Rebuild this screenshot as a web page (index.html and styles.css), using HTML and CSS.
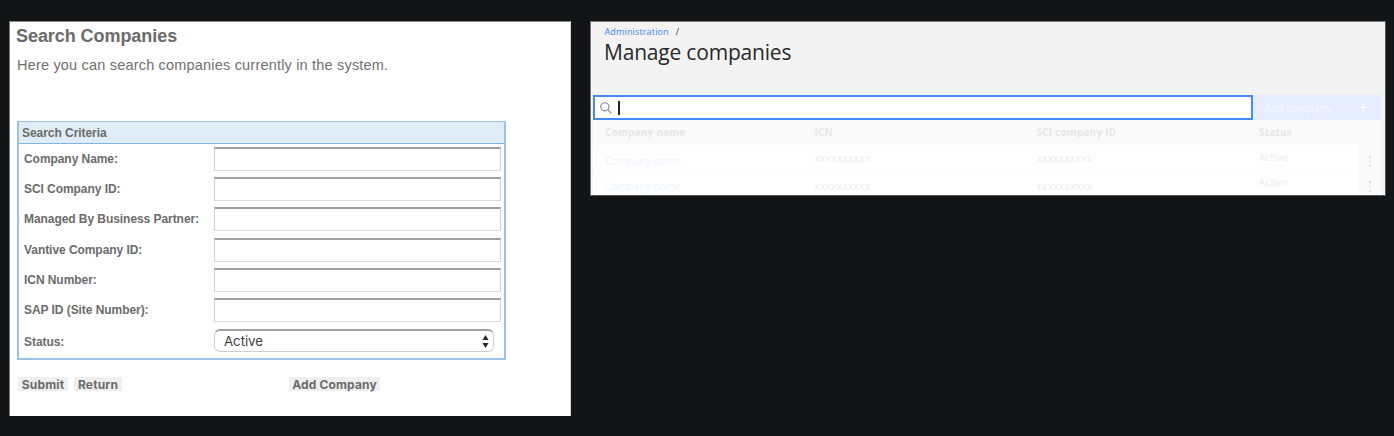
FILE: index.html
```html
<!DOCTYPE html>
<html lang="en">
<head>
<meta charset="utf-8">
<title>Manage companies</title>
<link rel="stylesheet" href="styles.css">
</head>
<body>
<main class="stage">
  <section class="legacy">
    <h1 class="legacy-title">Search Companies</h1>
    <p class="legacy-intro">Here you can search companies currently in the system.</p>
    <form class="criteria">
      <h2 class="criteria-head">Search Criteria</h2>
      <div class="fields">
        <label class="field"><span>Company Name:</span><i class="box"></i></label>
        <label class="field"><span>SCI Company ID:</span><i class="box"></i></label>
        <label class="field"><span>Managed By Business Partner:</span><i class="box"></i></label>
        <label class="field"><span>Vantive Company ID:</span><i class="box"></i></label>
        <label class="field"><span>ICN Number:</span><i class="box"></i></label>
        <label class="field"><span>SAP ID (Site Number):</span><i class="box"></i></label>
        <div class="field status"><span>Status:</span><div class="select"><span>Active</span>
          <svg width="7" height="13" viewBox="0 0 7 13"><path d="M3.5 0 6.6 5H.4ZM3.5 13 .4 8h6.2Z" fill="#2b2b2b"/></svg></div></div>
      </div>
    </form>
    <div class="actions"><b class="btn submit">Submit</b><b class="btn return">Return</b><b class="btn add">Add Company</b></div>
  </section>

  <section class="modern">
    <nav class="crumbs"><a>Administration</a><span>/</span></nav>
    <h1 class="modern-title">Manage companies</h1>
    <div class="toolbar">
      <div class="search">
        <svg width="12" height="12" viewBox="0 0 12 12" fill="none" stroke="#858585" stroke-width="1.1"><circle cx="4.8" cy="4.8" r="4.1"/><path d="m7.8 7.8 3.6 3.6"/></svg>
        <i class="caret"></i>
      </div>
      <div class="add-company"><span>Add company</span>
        <svg width="7" height="7" viewBox="0 0 7 7" stroke="#fff"><path d="M3.5 0v7M0 3.5h7"/></svg></div>
    </div>
    <div class="grid">
      <div class="row head"><b>Company name</b><b>ICN</b><b class="sci">SCI company ID</b><b>Status</b></div>
      <div class="row"><a>Company name</a><span class="x">xxxxxxxxxx</span><span class="x">xxxxxxxxxx</span><span>Active</span>
        <div class="more"><i></i><i></i><i></i></div></div>
      <div class="row second"><a>Company name</a><span class="x">xxxxxxxxxx</span><span class="x">xxxxxxxxxx</span><span>Active</span>
        <div class="more"><i></i><i></i><i></i></div></div>
    </div>
  </section>
</main>
</body>
</html>
```

FILE: styles.css
```css
* { box-sizing: border-box; }
body { margin: 0; background: #131416; }
h1, h2, p { margin: 0; font-weight: inherit; }
.stage { width: 1394px; height: 436px; padding: 21px 9px 0; display: flex; align-items: flex-start; gap: 19px; overflow: hidden; }

.legacy { width: 562px; height: 395px; flex: none; background: #fff; border-top: 1px solid #858585; border-left: 1px solid #777; border-right: 1px solid #d5d5d5; padding-left: 7px; font-family: "Liberation Sans", Arial, sans-serif; color: #6b6b6b; }
.legacy-title { font-size: 18px; font-weight: 700; line-height: 20px; margin: 4px 0 0 -1px; letter-spacing: -0.06px; }
.legacy-intro { font-size: 14.5px; line-height: 20px; margin-top: 9px; color: #707070; letter-spacing: 0.19px; }
.criteria { width: 489px; height: 239px; margin-top: 46px; border: 2px solid #9bc2e6; border-top-width: 1px; }
.criteria-head { height: 22px; background: #e0ecf6; border-bottom: 1px solid #7fb4e4; font-size: 12px; font-weight: 700; line-height: 22px; padding-left: 3px; letter-spacing: -0.05px; }
.fields { padding: 3px 0 0 5px; }
.field { display: grid; grid-template-columns: 190px 287px; height: 30.2px; font-size: 12px; font-weight: 700; line-height: 25px; letter-spacing: -0.06px; }
.box { height: 24px; border: 1px solid #cfcfcf; border-top: 2px solid #a0a0a0; border-bottom-color: #dcdcdc; }
.status { padding-top: 1px; line-height: 27px; }
.select { width: 280px; height: 23px; border: 1px solid #cfcfcf; border-top: 2px solid #a0a0a0; border-radius: 6px; display: flex; align-items: center; justify-content: space-between; padding: 0 4px 0 9px; font: 400 13.3px/20px Inter, sans-serif; color: #404040; }
.actions { display: flex; margin: 17px 0 0 1px; }
.btn { height: 14px; background: #efefef; font: 700 12px/15px Inter, "Liberation Sans", sans-serif; text-align: center; color: #6b6b6b; letter-spacing: 0.15px; }
.submit { width: 50px; }
.return { width: 48px; margin-left: 6px; }
.add { width: 91px; margin-left: 167px; }

.modern { width: 796px; height: 175px; flex: none; background: #f3f3f3; border: 1px solid #777; border-right-color: #555; border-bottom-color: #555; font-family: "Open Sans", "Noto Sans", sans-serif; }
.crumbs { display: flex; gap: 7px; padding: 4px 0 0 13.5px; font-size: 9px; line-height: 12px; letter-spacing: 0.15px; color: #333; }
.crumbs a { color: #3b82fb; }
.modern-title { font-size: 21px; line-height: 26px; padding-left: 13px; margin-top: 1px; color: #282828; letter-spacing: -0.2px; }
.toolbar { display: flex; height: 25px; margin: 30px 0 0 2px; }
.search { width: 660px; background: #fff; border: 2px solid #4589ff; display: flex; align-items: center; gap: 6px; padding-left: 5px; }
.caret { width: 1.5px; height: 14px; background: #222; }
.add-company { width: 129px; background: #e5edff; color: #f8faff; display: flex; align-items: center; justify-content: space-between; padding: 0 15px 0 11px; font-size: 10.5px; }
.grid { width: 789px; height: 75px; margin-left: 2px; background: #fff; overflow: hidden; }
.row { display: grid; grid-template-columns: 209.5px 222px 222.5px 99px 24px; height: 25px; padding-left: 12px; font-size: 10px; line-height: 25px; color: #ededed; border-bottom: 1px solid #fbfbfb; letter-spacing: 0.2px; }
.head { background: #fafafa; color: #e7e7e7; }
.row a { color: #edf4ff; line-height: 33px; }
.more { background: #fafafa; display: flex; flex-direction: column; align-items: center; justify-content: center; gap: 3px; }
.more i { width: 1.5px; height: 1.5px; background: #dcdcdc; }
.x { line-height: 26px; letter-spacing: 0.35px; }
.second .x { line-height: 32px; }
```
